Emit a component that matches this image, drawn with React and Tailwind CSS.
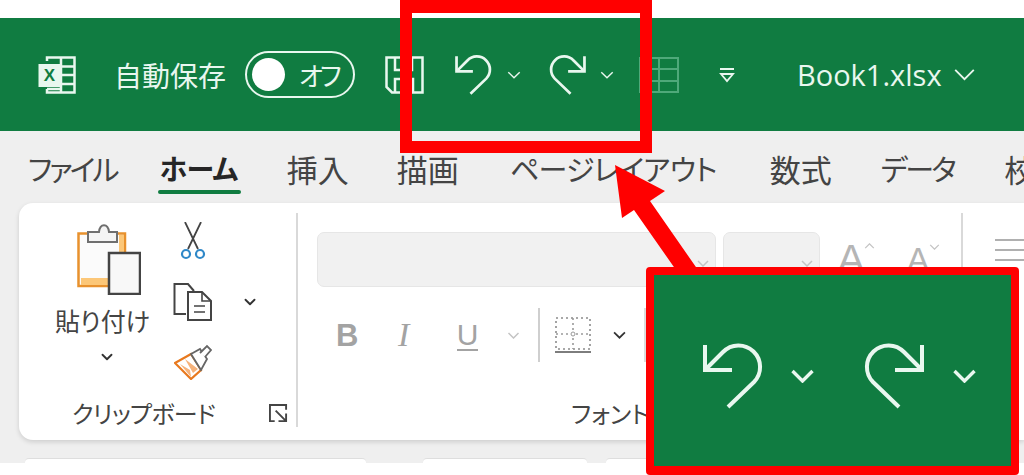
import React from 'react';
import { ChevronDown } from 'lucide-react';

const UndoPath = () => (
    <>
        <path d="M2 2V27H29" />
        <path d="M2 27L20 9A21.2 21.2 0 0 1 51 39L25 64" />
    </>
);

const RedoPath = () => (
    <>
        <path d="M58 2V27H31" />
        <path d="M58 27L40 9A21.2 21.2 0 0 0 9 39L35 64" />
    </>
);

function Arrow({ type, className, strokeWidth = 4 }) {
    return (
        <svg viewBox="0 0 60 66" fill="none" stroke="#e9f7ef" strokeWidth={strokeWidth} className={className}>
            {type === 'undo' ? <UndoPath /> : <RedoPath />}
        </svg>
    );
}

function Chev({ className, color = '#e9f7ef', sw = 2.5 }) {
    return (
        <svg viewBox="0 0 24 14" fill="none" stroke={color} strokeWidth={sw} className={className}>
            <path d="M2 2L12 12L22 2" />
        </svg>
    );
}

function TopBar() {
    return (
        <div className="h-[113px] bg-[#107c41] flex items-center text-[#e9f7ef]">
            <svg viewBox="0 0 38 38" className="w-[38px] h-[38px] ml-[38px]" fill="none" stroke="#e9f7ef" strokeWidth="2.5">
                <path d="M9 5V1.5H36.5V36.5H9V33" />
                <path d="M23 1.5V36.5M23 10.5H36.5M23 19H36.5M23 28H36.5M9 33H23" />
                <rect x="0.5" y="8" width="22" height="23" fill="#e9f7ef" stroke="none" />
                <text x="11.5" y="25" textAnchor="middle" fontSize="17" fontWeight="700" fill="#107c41" stroke="none" fontFamily="Liberation Sans">X</text>
            </svg>
            <span className="ml-[38px] text-[28px] leading-none w-[131px] whitespace-nowrap">自動保存</span>
            <div className="w-[110px] h-[47px] rounded-full border-[2.5px] border-[#e9f7ef] flex items-center pl-[5px]">
                <div className="w-[33px] h-[33px] rounded-full bg-white" />
                <span className="ml-[14px] text-[26px] leading-none tracking-[-3px] [font-feature-settings:'palt']">オフ</span>
            </div>
            <svg viewBox="0 0 39 38" className="w-[39px] h-[38px] ml-[30px]" fill="none" stroke="#e9f7ef" strokeWidth="2.5">
                <path d="M1.5 1.5H37.5V36.5H7L1.5 31Z" />
                <path d="M10 1.5V14H27V1.5M10 36.5V23H28V36.5" />
            </svg>
            <Arrow type="undo" className="w-[37px] h-[40px] ml-[31px]" strokeWidth={4.5} />
            <Chev className="w-[14px] h-[8px] ml-[15px]" />
            <Arrow type="redo" className="w-[37px] h-[40px] ml-[28px]" strokeWidth={4.5} />
            <Chev className="w-[14px] h-[8px] ml-[14px]" />
            <svg viewBox="0 0 40 36" className="w-[40px] h-[36px] ml-[25px]" fill="none" stroke="#4fa97a" strokeWidth="2">
                <path d="M1 1H39V35H1ZM1 12H39M1 24H39M20 1V35" />
            </svg>
            <svg viewBox="0 0 16 16" className="w-[16px] h-[16px] ml-[40px]" fill="none" stroke="#e9f7ef" strokeWidth="1.8">
                <path d="M1 2H15M2 7L8 14L14 7Z" />
            </svg>
            <span className="ml-[62px] text-[29px] leading-none font-['Open_Sans',sans-serif] -mt-[1px]">Book1.xlsx</span>
            <Chev className="w-[25px] h-[13px] ml-[10px]" sw={2} />
        </div>
    );
}

const tabs = [
    ['ファイル', 'ml-[28px] tracking-[-3px]'],
    ['ホーム', 'ml-[43px] font-bold text-[#262626] text-[28px] tracking-[-0.5px]'],
    ['挿入', 'ml-[49px] text-[31px]'],
    ['描画', 'ml-[48px] text-[31px]'],
    ['ページレイアウト', 'ml-[51px] tracking-[-0.7px]'],
    ['数式', 'ml-[53px] text-[31px]'],
    ['データ', 'ml-[49px] tracking-[-2.5px]'],
    ['校閲', 'ml-[50px] text-[31px]'],
];

function Tabs() {
    return (
        <div className="h-[72px] bg-[#efefef] flex items-center text-[#444] text-[29px] leading-none whitespace-nowrap overflow-hidden [font-feature-settings:'palt']">
            {tabs.map(([label, cls]) => (
                <div key={label} className={`relative shrink-0 pt-[2px] ${cls}`}>
                    {label}
                    {label === 'ホーム' && (
                        <div className="absolute -left-[1px] -right-[3px] -bottom-[12px] h-[4px] rounded-full bg-[#107c41]" />
                    )}
                </div>
            ))}
        </div>
    );
}

function PasteIcon() {
    return (
        <svg viewBox="0 0 64 71" className="w-[64px] h-[71px] ml-[12px]" fill="none">
            <path d="M1.5 9.5H48V62H1.5Z" fill="#fbfbfb" stroke="#e8912d" strokeWidth="2.5" />
            <path d="M4 54H32V61H4ZM42 11H47V30H42Z" fill="#fcc778" />
            <path d="M11 18V8H22C23 -1 31 -1 32 8H40V18Z" fill="#f4f4f4" stroke="#6f6f6f" strokeWidth="2" />
            <rect x="32" y="29" width="31" height="41" fill="#f8f8f8" stroke="#444" strokeWidth="2.5" />
        </svg>
    );
}

function Clipboard() {
    return (
        <div className="w-[277px] shrink-0 flex flex-col text-[#444]">
            <div className="h-[190px] flex">
                <div className="ml-[35px] w-[97px] flex flex-col items-center pt-[21px]">
                    <PasteIcon />
                    <span className="mt-[6px] text-[25px] leading-[38px] whitespace-nowrap [font-feature-settings:'palt']">貼り付け</span>
                    <ChevronDown className="w-[18px] h-[18px] mt-[9px] ml-[8px]" strokeWidth={2.5} color="#333" />
                </div>
                <div className="ml-[20px] w-[44px] flex flex-col items-center pt-[19px]">
                    <svg viewBox="0 0 26 38" className="w-[26px] h-[38px]" fill="none">
                        <path d="M5 0L18 27M21 0L8 27" stroke="#444" strokeWidth="1.8" />
                        <circle cx="6" cy="32" r="4" stroke="#2f88c8" strokeWidth="2.2" />
                        <circle cx="20" cy="32" r="4" stroke="#2f88c8" strokeWidth="2.2" />
                    </svg>
                    <svg viewBox="0 0 40 38" className="w-[40px] h-[38px] mt-[23px]" fill="none" stroke="#444" strokeWidth="2">
                        <path d="M13 31H1.5V1H15L21 8" />
                        <path d="M15 9H29L38 18V37H15Z" fill="#fff" />
                        <path d="M29 9V18H38M21 23H32M21 29H32" strokeWidth="1.6" />
                    </svg>
                    <svg viewBox="0 0 38 36" className="w-[38px] h-[36px] mt-[23px]" fill="none">
                        <path d="M1 19L17 10L27 26L17 35Z" fill="#fff" stroke="#e8791e" strokeWidth="2.2" />
                        <path d="M6 20L16 26L17 33ZM11 15L24 25L19 29Z" fill="#f6b27a" />
                        <path d="M17 10L26 5L33 15L27 26Z" fill="#fff" stroke="#666" strokeWidth="1.8" />
                        <path d="M26 9L33 2L37 6L31 13" fill="#fff" stroke="#666" strokeWidth="1.8" />
                    </svg>
                </div>
                <ChevronDown className="w-[18px] h-[18px] ml-[26px] mt-[90px]" strokeWidth={2.5} color="#333" />
            </div>
            <div className="flex items-center h-[36px] pt-[4px]">
                <span className="ml-[53px] text-[24px] leading-none tracking-[-0.7px] whitespace-nowrap [font-feature-settings:'palt']">クリップボード</span>
                <svg viewBox="0 0 20 20" className="w-[19px] h-[19px] ml-[54px]" fill="none" stroke="#444" strokeWidth="2">
                    <path d="M18 6V1H1V18H6M7 7L18 18M18 10V18H10" />
                </svg>
            </div>
        </div>
    );
}

function Combo({ className }) {
    return (
        <div className={`h-[55px] rounded-[7px] bg-[#f1f1f1] border border-[#e6e6e6] flex items-center justify-end pr-[6px] ${className}`}>
            <Chev className="w-[12px] h-[7px] mt-[8px]" color="#c4c4c4" sw={3} />
        </div>
    );
}

function FontGroup() {
    return (
        <div className="ml-[19px] w-[644px] shrink-0 flex flex-col">
            <div className="flex items-center mt-[29px]">
                <Combo className="w-[399px]" />
                <Combo className="w-[97px] ml-[7px]" />
                <span className="ml-[17px] w-[27px] text-[42px] leading-none text-[#b5b5b5] font-['Liberation_Sans',sans-serif]">A</span>
                <Chev className="w-[11px] h-[6px] -mt-[28px] rotate-180" color="#c4c4c4" sw={3} />
                <span className="ml-[32px] w-[22px] text-[33px] leading-none text-[#b5b5b5] font-['Liberation_Sans',sans-serif]">A</span>
                <Chev className="w-[11px] h-[6px] -mt-[26px]" color="#c4c4c4" sw={3} />
            </div>
            <div className="flex items-center h-[56px] mt-[20px] text-[#a3a3a3] font-['Liberation_Sans',sans-serif]">
                <span className="ml-[19px] w-[62px] text-[31px] leading-none font-bold">B</span>
                <span className="w-[59px] text-[34px] leading-none italic font-['Liberation_Serif',serif]">I</span>
                <span className="w-[21px] h-[31px] text-[30px] leading-none border-b-2 border-[#a3a3a3] flex justify-center">U</span>
                <Chev className="w-[13px] h-[7px] ml-[29px]" color="#c4c4c4" sw={3} />
                <div className="w-[2px] h-[54px] bg-[#cfcfcf] ml-[18px]" />
                <svg viewBox="0 0 36 36" className="w-[36px] h-[36px] ml-[15px]" fill="none">
                    <rect x="1" y="1" width="34" height="31" stroke="#8c8c8c" strokeWidth="1.6" strokeDasharray="2 3" />
                    <path d="M18 1V32M1 17H35" stroke="#9a9a9a" strokeWidth="1.6" strokeDasharray="2 3" />
                    <circle cx="18" cy="17" r="2" fill="#fff" stroke="#9a9a9a" />
                    <path d="M0 35H36" stroke="#7d7d7d" strokeWidth="2" />
                </svg>
                <Chev className="w-[13px] h-[8px] ml-[22px]" color="#333" sw={3.2} />
                <div className="w-[2px] h-[54px] bg-[#dcdcdc] ml-[18px]" />
            </div>
            <span className="mt-[38px] ml-[254px] text-[24px] leading-none text-[#444] whitespace-nowrap [font-feature-settings:'palt']">フォント</span>
        </div>
    );
}

function Ribbon() {
    return (
        <div className="h-[237px] ml-[19px] bg-white rounded-l-[14px] shadow-[0_2px_5px_rgba(0,0,0,0.14)] flex overflow-hidden">
            <Clipboard />
            <div className="w-[2px] h-[214px] mt-[10px] bg-[#d9d9d9] shrink-0" />
            <FontGroup />
            <div className="w-[2px] h-[214px] mt-[10px] bg-[#d9d9d9] shrink-0" />
            <div className="ml-[32px] mt-[36px] w-full flex flex-col gap-[8px]">
                <div className="h-[2px] bg-[#b0b0b0]" />
                <div className="h-[2px] bg-[#b0b0b0]" />
                <div className="h-[2px] bg-[#b0b0b0]" />
            </div>
        </div>
    );
}

// white cells just starting under the ribbon
function BottomCells() {
    return (
        <div className="h-[5px] mt-[18px] flex">
            <div className="ml-[25px] w-[341px] bg-white border-t border-[#dedede] rounded-t-[4px]" />
            <div className="ml-[57px] w-[164px] bg-white border-t border-[#dedede] rounded-t-[4px]" />
            <div className="ml-[19px] w-[60px] bg-white border-t border-[#dedede] rounded-t-[4px]" />
        </div>
    );
}

function Overlays() {
    return (
        <>
            <div className="absolute left-[400px] top-0 w-[252px] h-[153px] border-[12px] border-t-[13px] border-[#ff0000]" />
            <svg viewBox="0 0 1024 475" className="absolute left-0 top-0 w-[1024px] h-[475px] pointer-events-none">
                <path d="M615 165L665 191L650 201L698 270L676 270L634 210L622 218Z" fill="#ff0000" />
            </svg>
            <div className="absolute left-[646px] top-[267px] w-[373px] h-[208px] rounded-[4px] border-[8px] border-b-[9px] border-[#ff0000] bg-[#107c41] flex items-center">
                <Arrow type="undo" className="w-[60px] h-[66px] ml-[49px] mt-[10px]" />
                <Chev className="w-[25px] h-[14px] ml-[27px] mt-[10px]" sw={3.4} />
                <Arrow type="redo" className="w-[60px] h-[66px] ml-[49px] mt-[10px]" />
                <Chev className="w-[25px] h-[14px] ml-[28px] mt-[10px]" sw={3.4} />
            </div>
        </>
    );
}

export default function App() {
    return (
        <div className="relative w-[1024px] h-[475px] overflow-hidden bg-white font-['Noto_Sans_CJK_JP','Noto_Sans',sans-serif]">
            <div className="h-[18px] bg-white" />
            <TopBar />
            <Tabs />
            <div className="h-[260px] bg-[#efefef]">
                <Ribbon />
                <BottomCells />
            </div>
            <div className="h-[12px] bg-white" />
            <Overlays />
        </div>
    );
}
